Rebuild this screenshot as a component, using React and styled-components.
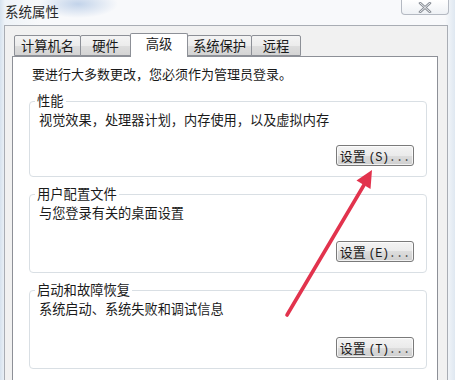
import React from "react";
import styled, { createGlobalStyle } from "styled-components";

const Global = createGlobalStyle`
  html, body { margin: 0; padding: 0; background: #ffffff; }
  body { font-family: "Noto Sans CJK SC", "Noto Sans", sans-serif; }
`;

const Screen = styled.div`
  position: relative;
  width: 455px;
  height: 380px;
  overflow: hidden;
  display: flex;
  flex-direction: column;
  background:
    radial-gradient(ellipse 40px 14px at 78px 4px, rgba(150, 180, 220, 0.55), rgba(150, 180, 220, 0) 100%),
    linear-gradient(to right, #d6e2ee 0px, #eef3f8 5px, #f8f9fb 40px, #f8f9fb 445px, #dfe8f1 455px);
  font-family: "Noto Sans CJK SC", "Noto Sans", sans-serif;
  color: #1a1a1a;
`;

const TitleBar = styled.div`
  height: 25px;
  flex: none;
  display: flex;
  align-items: flex-start;
  justify-content: space-between;
  padding-left: 5px;
`;

const Title = styled.div`
  font-size: 13.5px;
  line-height: 22px;
  color: #2a2a2a;
`;

const CloseButton = styled.div`
  width: 48px;
  height: 15px;
  margin-right: 6px;
  box-sizing: border-box;
  border: 1px solid #b4b9c2;
  border-top: none;
  border-radius: 0 0 4px 4px;
  background: linear-gradient(#ffffff, #eef1f5);
  display: flex;
  align-items: center;
  justify-content: center;
`;

const Frame = styled.div`
  flex: 1;
  margin-left: 4px;
  width: 444px;
  box-sizing: border-box;
  border: 1px solid #a9adb4;
  border-bottom: none;
  background: #f1f1f1;
  padding: 7px 9px 0 7px;
  display: flex;
  flex-direction: column;
`;

const TabStrip = styled.div`
  display: flex;
  align-items: flex-end;
  padding-left: 2px;
  position: relative;
  z-index: 1;
`;

const Tab = styled.div`
  box-sizing: border-box;
  width: ${(p) => p.$w}px;
  height: ${(p) => (p.$active ? 24 : 21)}px;
  margin-right: -1px;
  margin-bottom: ${(p) => (p.$active ? -1 : 0)}px;
  border: 1px solid #8d9097;
  border-bottom: ${(p) => (p.$active ? "none" : "1px solid #8d9097")};
  border-radius: 2px 2px 0 0;
  background: ${(p) =>
    p.$active
      ? "#ffffff"
      : "linear-gradient(#f4f4f4, #ececec 50%, #dedede 50%, #d4d4d4)"};
  font-size: 13.3px;
  line-height: ${(p) => (p.$active ? 20 : 19)}px;
  text-align: center;
  color: #1a1a1a;
  position: relative;
  z-index: ${(p) => (p.$active ? 2 : 1)};
`;

const Page = styled.div`
  flex: 1;
  background: #ffffff;
  border: 1px solid #8d9097;
  border-bottom: none;
  padding: 9px 10px 0 16px;
`;

const Notice = styled.div`
  font-size: 13px;
  line-height: 16px;
  margin-left: 3px;
`;

const Group = styled.fieldset`
  margin: ${(p) => (p.$first ? 11 : 9)}px 0 0 0;
  padding: 3px 12px 10px 9px;
  min-width: 0;
  border: 1px solid #d9dfe4;
  border-radius: 4px;
`;

const GroupTitle = styled.legend`
  font-size: 13.3px;
  line-height: 16px;
  padding: 0 2px;
  margin-left: -4px;
  color: #1a1a1a;
`;

const Desc = styled.div`
  font-size: 13.2px;
  line-height: 16px;
`;

const ButtonRow = styled.div`
  display: flex;
  justify-content: flex-end;
  margin-top: ${(p) => p.$gap}px;
`;

const SettingsButton = styled.button`
  width: 78px;
  height: 21px;
  box-sizing: border-box;
  padding: 0;
  border: 1px solid #7a7a7a;
  border-radius: 3px;
  background: linear-gradient(#f3f3f3, #ebebeb 50%, #dddddd 50%, #cfcfcf);
  box-shadow: inset 0 0 0 1px rgba(255, 255, 255, 0.7);
  font-family: "Noto Sans CJK SC", "Noto Sans", sans-serif;
  font-size: 13px;
  line-height: 19px;
  color: #1a1a1a;
  text-align: center;
  white-space: nowrap;
`;

const Mnemonic = styled.span`
  font-family: "Liberation Mono", monospace;
  font-size: 12px;
  letter-spacing: -0.5px;
`;

const Dots = styled.span`
  font-family: "Liberation Mono", monospace;
  font-size: 12px;
  color: #555;
`;

const ArrowLayer = styled.svg`
  position: absolute;
  left: 0;
  top: 0;
  width: 455px;
  height: 380px;
  pointer-events: none;
`;

const tabs = [
  { label: "计算机名", w: 67 },
  { label: "硬件", w: 51 },
  { label: "高级", w: 58, active: true },
  { label: "系统保护", w: 65 },
  { label: "远程", w: 50 },
];

const groups = [
  { title: "性能", desc: "视觉效果，处理器计划，内存使用，以及虚拟内存", key: "S", gap: 17 },
  { title: "用户配置文件", desc: "与您登录有关的桌面设置", key: "E", gap: 20 },
  { title: "启动和故障恢复", desc: "系统启动、系统失败和调试信息", key: "T", gap: 20 },
];

export default function App() {
  return (
    <>
      <Global />
      <Screen>
        <TitleBar>
          <Title>系统属性</Title>
          <CloseButton>
            <svg width="14" height="11" viewBox="0 0 14 11">
              <path d="M2 1 L12 10 M12 1 L2 10" stroke="#8a8f97" strokeWidth="2.6" strokeLinecap="round" />
              <path d="M2 1 L12 10 M12 1 L2 10" stroke="#f4f5f7" strokeWidth="0.9" strokeLinecap="round" />
            </svg>
          </CloseButton>
        </TitleBar>
        <Frame>
          <TabStrip>
            {tabs.map((t) => (
              <Tab key={t.label} $w={t.w} $active={t.active}>
                {t.label}
              </Tab>
            ))}
          </TabStrip>
          <Page>
            <Notice>要进行大多数更改，您必须作为管理员登录。</Notice>
            {groups.map((g, i) => (
              <Group key={g.title} $first={i === 0}>
                <GroupTitle>{g.title}</GroupTitle>
                <Desc>{g.desc}</Desc>
                <ButtonRow $gap={g.gap}>
                  <SettingsButton>
                    设置 <Mnemonic>({g.key})</Mnemonic>
                    <Dots>...</Dots>
                  </SettingsButton>
                </ButtonRow>
              </Group>
            ))}
          </Page>
        </Frame>
        <ArrowLayer viewBox="0 0 455 380">
          <line x1="287" y1="315" x2="364" y2="185" stroke="#e2334d" strokeWidth="3.6" strokeLinecap="round" />
          <polygon points="372,170 370.5,189 356.5,180.5" fill="#e2334d" />
        </ArrowLayer>
      </Screen>
    </>
  );
}
